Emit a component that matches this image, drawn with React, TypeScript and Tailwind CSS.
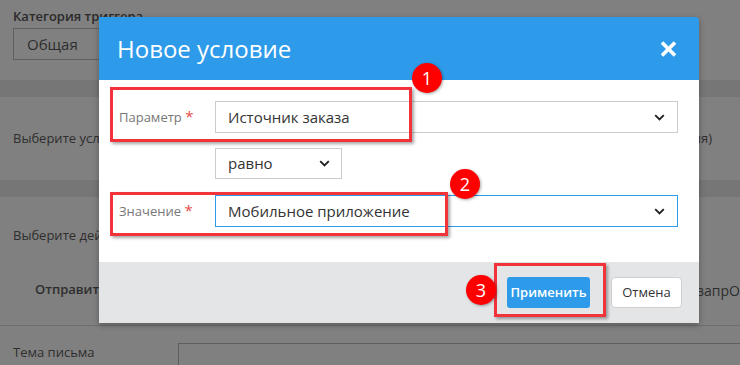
import React from "react";

const Chevron = () => (
  <svg width="11" height="7" viewBox="0 0 11 7" className="shrink-0">
    <path d="M1.2 1.2 L5.5 5.5 L9.8 1.2" fill="none" stroke="#222" strokeWidth="1.9" />
  </svg>
);

const Badge = ({ n, cls }: { n: string; cls: string }) => (
  <div
    className={`absolute w-[30px] h-[30px] rounded-full bg-[#ff0000] text-white flex items-center justify-center text-[18px] leading-none shadow-[1px_1px_3px_rgba(0,0,0,0.35)] ${cls}`}
  >
    {n}
  </div>
);

export default function App() {
  return (
    <div
      className="relative w-[740px] h-[365px] overflow-hidden bg-[#808080] text-[#2e2e2e]"
      style={{ fontFamily: '"Open Sans", "Noto Sans", sans-serif' }}
    >
      {/* background page */}
      <div className="px-[13px] pt-[7px] h-[80px]">
        <div className="text-[13px] font-semibold leading-[18px] text-[#2a2a2a]">Категория триггера</div>
        <div className="mt-[3px] w-[240px] h-[32px] border border-[#5f5f5f] flex items-center pl-[13px] text-[15px]">
          Общая
        </div>
      </div>
      <div className="h-[17px] bg-[#767676]" />
      <div className="h-[83px] flex items-center justify-between px-[13px] text-[13px]">
        <span>Выберите условия</span>
        <span className="pr-[15px]">ия)</span>
      </div>
      <div className="h-[17px] bg-[#767676]" />
      <div className="h-[78px] flex items-center px-[13px] text-[13px]">
        <span>Выберите действие</span>
      </div>
      <div className="h-[30px] flex items-center justify-between pl-[35px] text-[13px] font-semibold">
        <span>Отправить</span>
        <span className="font-normal text-[14px]">-запрО</span>
      </div>
      <div className="mt-[20px] h-px bg-[#6e6e6e]" />
      <div className="flex items-start pl-[13px] pt-[17px] text-[13px]">
        <span className="w-[165px] mt-[0px] leading-[18px]">Тема письма</span>
        <div className="flex-1 h-[40px] border border-[#5f5f5f] mr-[-2px]" />
      </div>

      {/* modal */}
      <div className="absolute left-[99px] top-[17px] w-[600px] rounded-tr-[4px] overflow-hidden shadow-[0_2px_6px_rgba(0,0,0,0.3)]">
        <div className="h-[63px] bg-[#2d9bea] flex items-center justify-between pl-[18px] pr-[22px]">
          <span className="text-white text-[24px] leading-none">Новое условие</span>
          <svg width="17" height="16" viewBox="0 0 17 16">
            <path d="M2 1.5 L15 14.5 M15 1.5 L2 14.5" stroke="#fff" strokeWidth="3.6" />
          </svg>
        </div>
        <div className="h-[182px] bg-white pt-[21px] pl-[20px] pr-[21px]">
          <div className="flex items-center">
            <div className="w-[96px] text-[13px] text-[#777] -mt-[2px]">
              Параметр <span className="text-[#e84c4c] text-[15px]">*</span>
            </div>
            <div className="flex-1 h-[32px] border border-[#cccccc] flex items-center justify-between pl-[12px] pr-[12px] text-[15px] text-[#333]">
              <span>Источник заказа</span>
              <Chevron />
            </div>
          </div>
          <div className="mt-[15px] ml-[96px] w-[127px] h-[31px] border border-[#cccccc] flex items-center justify-between pl-[12px] pr-[11px] text-[15px] text-[#333]">
            <span>равно</span>
            <Chevron />
          </div>
          <div className="mt-[16px] flex items-center">
            <div className="w-[96px] text-[13px] text-[#777] -mt-[2px]">
              Значение <span className="text-[#e84c4c] text-[15px]">*</span>
            </div>
            <div className="flex-1 h-[32px] border border-[#2d9bea] flex items-center justify-between pl-[12px] pr-[12px] text-[15px] text-[#333]">
              <span>Мобильное приложение</span>
              <Chevron />
            </div>
          </div>
        </div>
        <div className="h-[61px] bg-[#e4e5e7] flex items-center justify-end gap-[21px] pr-[17px]">
          <button className="w-[83px] h-[31px] rounded-[3px] bg-[#2d9bea] text-white text-[13px] font-semibold">
            Применить
          </button>
          <button className="w-[71px] h-[31px] rounded-[4px] bg-white border border-[#cfcfcf] text-[#333] text-[13px]">
            Отмена
          </button>
        </div>
      </div>

      {/* annotations */}
      <div className="absolute left-[110px] top-[87px] w-[302px] h-[55px] border-[3px] border-[#f2333a] shadow-[2px_2px_3px_rgba(0,0,0,0.35)]" />
      <div className="absolute left-[110px] top-[192px] w-[338px] h-[44px] border-[3px] border-[#f2333a] shadow-[2px_2px_3px_rgba(0,0,0,0.35)]" />
      <div className="absolute left-[494px] top-[263px] w-[112px] h-[54px] border-[3px] border-[#f2333a] shadow-[2px_2px_3px_rgba(0,0,0,0.35)]" />
      <Badge n="1" cls="left-[412px] top-[63px]" />
      <Badge n="2" cls="left-[450px] top-[169px]" />
      <Badge n="3" cls="left-[466px] top-[275px]" />
    </div>
  );
}
